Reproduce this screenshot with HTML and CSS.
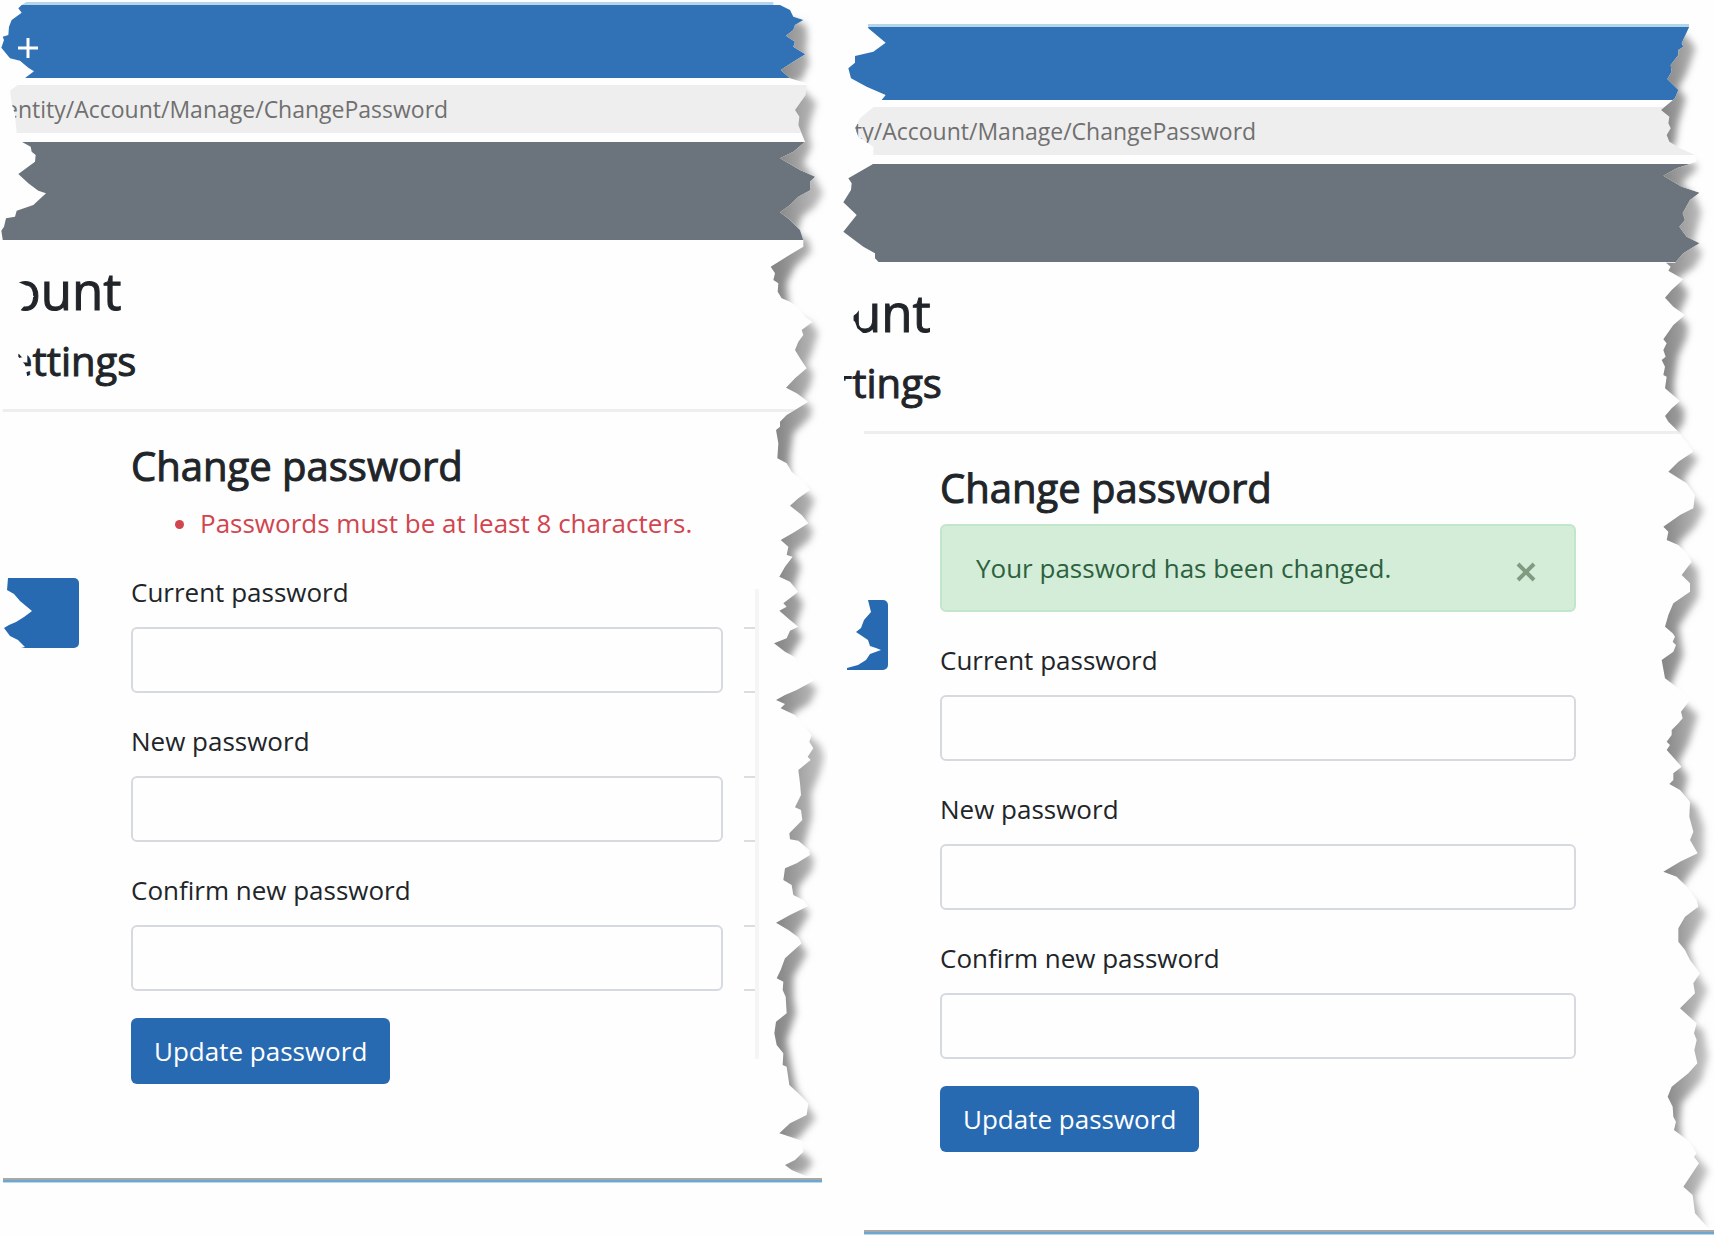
FILE: index.html
```
<!DOCTYPE html>
<html lang="en">
<head>
<meta charset="utf-8">
<title>Change password</title>
<link rel="stylesheet" href="styles.css">
</head>
<body>
<main class="sheets">
  <section class="sheet sheet-error">
    <div class="tabs"><button class="new-tab" type="button" aria-label="New tab"><svg width="20" height="20" viewBox="0 0 20 20"><path d="M10 0v20M0 10h20" stroke="#fff" stroke-width="3"/></svg></button></div>
    <input class="address" type="text" aria-label="Address" value="entity/Account/Manage/ChangePassword" readonly>
    <div class="navbar"></div>
    <header class="intro">
      <h1>ount</h1>
      <h2>ettings</h2>
    </header>
    <div class="body">
      <nav><a class="pill" href="#" aria-label="Password"></a></nav>
      <form class="form">
        <h3>Change password</h3>
        <ul class="errors"><li>Passwords must be at least 8 characters.</li></ul>
        <label for="current-a">Current password</label>
        <input class="field" id="current-a" type="password">
        <label for="new-a">New password</label>
        <input class="field" id="new-a" type="password">
        <label for="confirm-a">Confirm new password</label>
        <input class="field" id="confirm-a" type="password">
        <button class="update" type="button">Update password</button>
      </form>
      <svg class="rail" width="16" height="470" viewBox="0 0 16 470"><path d="M13 0v470" stroke="#f5f5f5" stroke-width="4"/><path d="M0 39h11M0 103h11M0 188h11M0 252h11M0 337h11M0 401h11" stroke="#dcdce2" stroke-width="2"/></svg>
    </div>
    <div class="edge"></div>
    <svg class="tear tear-left" width="50" height="1236" viewBox="0 0 150 3708"><path fill="#fefefe" d="M0 0H88L65 15 55 25 65 38 35 60 27 80 25 105 8 110 12 120 4 143 30 175 60 182 85 203 102 214 78 232 60 250 30 272 35 310 45 345 50 400 65 425 92 440 95 455 107 465 105 485 55 522 85 550 115 572 138 580 100 615 50 632 45 650 18 655 12 680 4 692 8 718V780L45 842 75 855 90 872 102 890 90 896 80 910 62 930 55 1000 82 1030V1090L55 1060V1070L75 1094 82 1130 8 1180V1700L24 1734 21 1770 42 1782 60 1803 78 1818 96 1833 72 1851 48 1866 27 1875 12 1884 30 1908 54 1920 75 1941 0 1960Z"/></svg>
    <svg class="tear tear-right" width="88" height="1236" viewBox="0 0 264 3708">
      <defs>
        <clipPath id="cut-a"><path id="edge-a" d="M100 0V15H120L150 30 160 50 190 60 165 75 160 90 138 107 165 125 160 140 196 163 160 185 122 210 150 235 200 250 197 285 165 330 178 350 175 375 195 425 160 455 120 475 180 510 225 530 210 545 212 570 175 590 150 615 120 637 150 660 180 690 190 720 190 740 140 770 92 800 105 820 100 840 115 850 113 875 125 895 150 905 175 922 195 950 218 965 185 990 190 1005 175 1025 165 1050 180 1075 200 1105 165 1135 138 1163 170 1180 205 1205 165 1230 140 1245 120 1265 120 1280 108 1290 115 1330 112 1375 140 1390 155 1415 190 1445 210 1470 175 1495 150 1517 185 1545 205 1570 165 1595 122 1620 145 1640 140 1665 158 1670 135 1700 118 1730 150 1745 175 1775 130 1810 140 1820 118 1832 150 1860 175 1880 150 1892 140 1915 102 1930 135 1955 165 1972 175 1997 205 2025 225 2040 170 2070 135 2085 108 2100 135 2112 122 2125 165 2145 188 2173 215 2205 208 2225 220 2245 203 2270 212 2280 175 2310 180 2350 183 2385 165 2422 183 2430 187 2460 148 2500 150 2518 175 2522 208 2550 210 2565 170 2590 135 2605 130 2640 155 2655 160 2685 190 2700 205 2718 150 2745 108 2768 145 2790 175 2812 185 2830 135 2875 122 2910 110 2935 130 2945 128 2970 137 2990 140 3040 108 3065 103 3100 110 3135 130 3160 128 3195 140 3200 148 3255 175 3280 205 3310 200 3345 150 3370 118 3400 150 3410 185 3422 190 3455 165 3480 135 3495 155 3510 190 3525 200 3529H264V0Z"/></clipPath>
        <filter id="soft-a" x="-20%" width="140%" y="-5%" height="110%"><feGaussianBlur stdDeviation="11"/></filter>
        <linearGradient id="shade-a" gradientUnits="userSpaceOnUse" x1="110" y1="0" x2="250" y2="0"><stop offset="0" stop-color="#858585"/><stop offset="1" stop-color="#c4c4c4"/></linearGradient>
      </defs>
      <use href="#edge-a" fill="#fefefe"/>
      <g clip-path="url(#cut-a)"><path filter="url(#soft-a)" fill="url(#shade-a)" d="M60 60H160L198 75 203 110 198 150 208 190 185 240 150 250 195 275 230 310 212 360 205 400 215 440 190 490 225 535 250 580 225 620 185 650 172 700 205 720 214 755 165 800 140 850 145 900 150 925 180 955 215 970 235 1000 215 1060 200 1095 220 1120 210 1160 185 1200 215 1220 212 1250 160 1300 150 1370 150 1410 160 1450 200 1475 225 1500 195 1565 220 1590 210 1620 160 1660 182 1700 160 1770 190 1810 165 1880 188 1910 150 1970 130 2000 200 2045 232 2065 210 2110 160 2140 150 2180 200 2205 240 2235 253 2270 240 2320 214 2380 216 2450 190 2545 222 2575 217 2610 175 2660 175 2705 210 2740 165 2810 180 2830 202 2860 160 2930 160 2990 168 3040 140 3120 155 3200 170 3270 195 3310 228 3355 175 3415 130 3435 200 3465 220 3490 190 3522H60Z"/></g>
    </svg>
  </section>

  <section class="sheet sheet-success">
    <div class="tabs"></div>
    <input class="address" type="text" aria-label="Address" value="ty/Account/Manage/ChangePassword" readonly>
    <div class="navbar"></div>
    <header class="intro">
      <h1>unt</h1>
      <h2>ttings</h2>
    </header>
    <div class="body">
      <nav><a class="pill" href="#" aria-label="Password"></a></nav>
      <form class="form">
        <h3>Change password</h3>
        <div class="alert" role="alert"><span>Your password has been changed.</span><button class="close" type="button" aria-label="Close"><svg width="20" height="20" viewBox="0 0 20 20"><path d="M2 2l16 16M18 2L2 18" stroke="#7f9b80" stroke-width="4"/></svg></button></div>
        <label for="current-b">Current password</label>
        <input class="field" id="current-b" type="password">
        <label for="new-b">New password</label>
        <input class="field" id="new-b" type="password">
        <label for="confirm-b">Confirm new password</label>
        <input class="field" id="confirm-b" type="password">
        <button class="update" type="button">Update password</button>
      </form>
    </div>
    <div class="edge"></div>
    <svg class="tear tear-left" width="62" height="1236" viewBox="264 0 186 3708"><path fill="#fefefe" d="M264 0H383V70L385 85 437 128 400 155 345 168 345 188 325 205 333 235 380 260 437 285 425 300 400 322 360 355 345 385 355 410 400 440V468L398 493 325 535 335 550 333 570 310 607 350 645 310 695 370 740 405 760 405 775 415 785 395 880 350 940 330 955 345 965 352 985 370 1000 345 1060V1128H312V1142H345V1200L372 1280V1700L384 1800 393 1836 372 1860 363 1884 348 1896 384 1920 390 1938 408 1944 423 1950 390 1962 378 1980 354 1995 321 2004V2016L372 2050V3670L366 3708H264Z"/></svg>
    <svg class="tear tear-right" width="114" height="1236" viewBox="0 0 342 3708">
      <defs>
        <clipPath id="cut-b"><path id="edge-b" d="M267 0V82L245 130 250 140 235 150 235 165 212 195 215 215 202 237 235 270 225 295 183 330 208 350 205 370 212 385 200 405 208 425 240 445 285 465 290 485 230 505 190 527 245 560 298 578 270 600 248 640 255 660 238 680 260 710 298 730 250 760 225 788H198L212 800 205 812 250 838 215 870 195 893 220 920 255 945 220 975 190 1018 200 1030 190 1050 197 1070 185 1080 195 1100 190 1125 200 1130 195 1165 240 1203 215 1225 195 1248 205 1265 240 1300 280 1355 235 1385 205 1415 260 1450 285 1485 280 1525 240 1545 190 1580 205 1595 200 1620 235 1635 262 1662 275 1685 245 1725 270 1750 270 1775 220 1810 205 1845 195 1880 218 1900 225 1910 218 1925 228 1935 220 1955 185 1980 195 2035 235 2065 270 2100 243 2135 248 2155 235 2170 215 2190 215 2205 200 2225 210 2235 200 2250 245 2300 220 2320 220 2340 208 2352 240 2370 270 2405 268 2450 280 2495 270 2520 293 2560 240 2585 190 2615 230 2630 262 2662 290 2700 295 2720 255 2750 235 2785 235 2825 255 2850 270 2880 300 2920 280 2950 285 2980 240 3025 290 3070 282 3100 290 3120 283 3150 292 3190 265 3220 215 3260 203 3290 218 3320 220 3350 228 3365 222 3390 262 3420 275 3435 290 3460 282 3470 297 3490 250 3560 278 3585 285 3640 325 3685H342V0Z"/></clipPath>
        <filter id="soft-b" x="-20%" width="140%" y="-5%" height="110%"><feGaussianBlur stdDeviation="11"/></filter>
        <linearGradient id="shade-b" gradientUnits="userSpaceOnUse" x1="190" y1="0" x2="320" y2="0"><stop offset="0" stop-color="#858585"/><stop offset="1" stop-color="#c4c4c4"/></linearGradient>
      </defs>
      <use href="#edge-b" fill="#fefefe"/>
      <g clip-path="url(#cut-b)"><path filter="url(#soft-b)" fill="url(#shade-b)" d="M140 90H230L265 115 287 145 260 220 235 265 258 295 235 370 225 435 190 465 285 490 294 505 245 550 285 590 305 635 290 690 280 725 308 760 285 800 230 838 262 870 262 890 235 945 264 975 261 1010 234 1070 222 1150 225 1200 254 1230 251 1270 225 1300 260 1352 295 1375 250 1440 270 1480 312 1530 285 1580 235 1630 240 1670 275 1690 294 1710 296 1790 236 1880 250 1965 210 2062 240 2100 294 2145 266 2230 235 2290 264 2330 250 2390 290 2420 312 2480 310 2570 265 2630 240 2670 280 2700 320 2740 265 2840 285 2910 323 2970 275 3070 310 3090 325 3170 305 3240 245 3310 240 3370 245 3425 270 3450 325 3510 285 3590 315 3685H140Z"/></g>
    </svg>
  </section>
</main>
</body>
</html>
```
FILE: styles.css
```
* { box-sizing: border-box; }

body {
  margin: 0;
  background: #fefefe;
  color: #212529;
  font: 26px/42px "Open Sans", "Noto Sans", sans-serif;
}

.sheets {
  display: grid;
  grid-template-columns: 828fr 886fr;
  align-items: start;
}

.sheet {
  position: relative;
  display: flex;
  flex-direction: column;
  overflow: hidden;
  padding-top: 2px;
}

.sheet-success { padding-top: 24px; }

.tabs {
  display: flex;
  align-items: center;
  height: 76px;
  padding: 12px 18px 0;
  background: #3072b5;
  border-top: 3px solid #b4d6eb;
}

.new-tab, .close {
  display: flex;
  padding: 0;
  border: 0;
  background: none;
}

.close { margin-top: 8px; }

.address {
  height: 48px;
  margin: 7px 0 9px;
  padding: 0 0 0 5px;
  border: 0;
  background: #eee;
  color: #707070;
  font: 23px/48px "Open Sans", "Noto Sans", sans-serif;
}

.navbar {
  height: 98px;
  background: #6b747c;
}

.intro {
  padding: 18px 0;
  border-bottom: 3px solid #eee;
}

h1, h2, h3 {
  margin: 0;
  font-weight: 500;
  -webkit-text-stroke: 1px currentColor;
}

h1 { padding-left: 10px; font-size: 51px; line-height: 64px; }
h2 { margin-top: 9px; padding-left: 10px; font-size: 40px; line-height: 60px; }
h3 { font-size: 40px; line-height: 60px; }

.body {
  display: flex;
  align-items: flex-start;
  padding: 24px 68px 0 0;
}

nav { width: 79px; margin-right: 52px; padding-top: 142px; }

.pill {
  display: block;
  height: 70px;
  border-radius: 0 5px 5px 0;
  background: #286ab2;
}

.form {
  display: flex;
  flex: 1;
  flex-direction: column;
  align-items: stretch;
}

.rail { margin: 153px 0 0 21px; }

.errors {
  margin: 6px 0 27px;
  padding-left: 69px;
  color: #d1454f;
}

.alert {
  display: flex;
  align-items: center;
  justify-content: space-between;
  height: 88px;
  margin: 6px 0 27px;
  padding: 0 38px 0 34px;
  border: 2px solid #c3e6cb;
  border-radius: 6px;
  background: #d4edd8;
  color: #2d6140;
}

.field {
  width: 100%;
  height: 66px;
  margin: 14px 0 27px;
  border: 2px solid #d7d9e0;
  border-radius: 6px;
  background: #fefefe;
}

.update {
  align-self: flex-start;
  height: 66px;
  padding: 0 23px;
  border: 0;
  border-radius: 6px;
  background: #286ab2;
  color: #fff;
  font: inherit;
}

.edge {
  height: 5px;
  margin: 94px 6px 0 3px;
  border-top: 2px solid #a7a9a6;
  border-bottom: 1px solid #b9d8ea;
  background: #6fa6d0;
}

.sheet-success h1 { padding-left: 22px; }
.sheet-success .address { padding-left: 26px; }
.sheet-success nav { width: 60px; }
.sheet-success .body { padding-right: 138px; }
.sheet-success .edge { margin: 78px 0 0 36px; }

.tear {
  position: absolute;
  top: 0;
  pointer-events: none;
}

.tear-left { left: 0; }
.tear-right { right: 0; }
```
